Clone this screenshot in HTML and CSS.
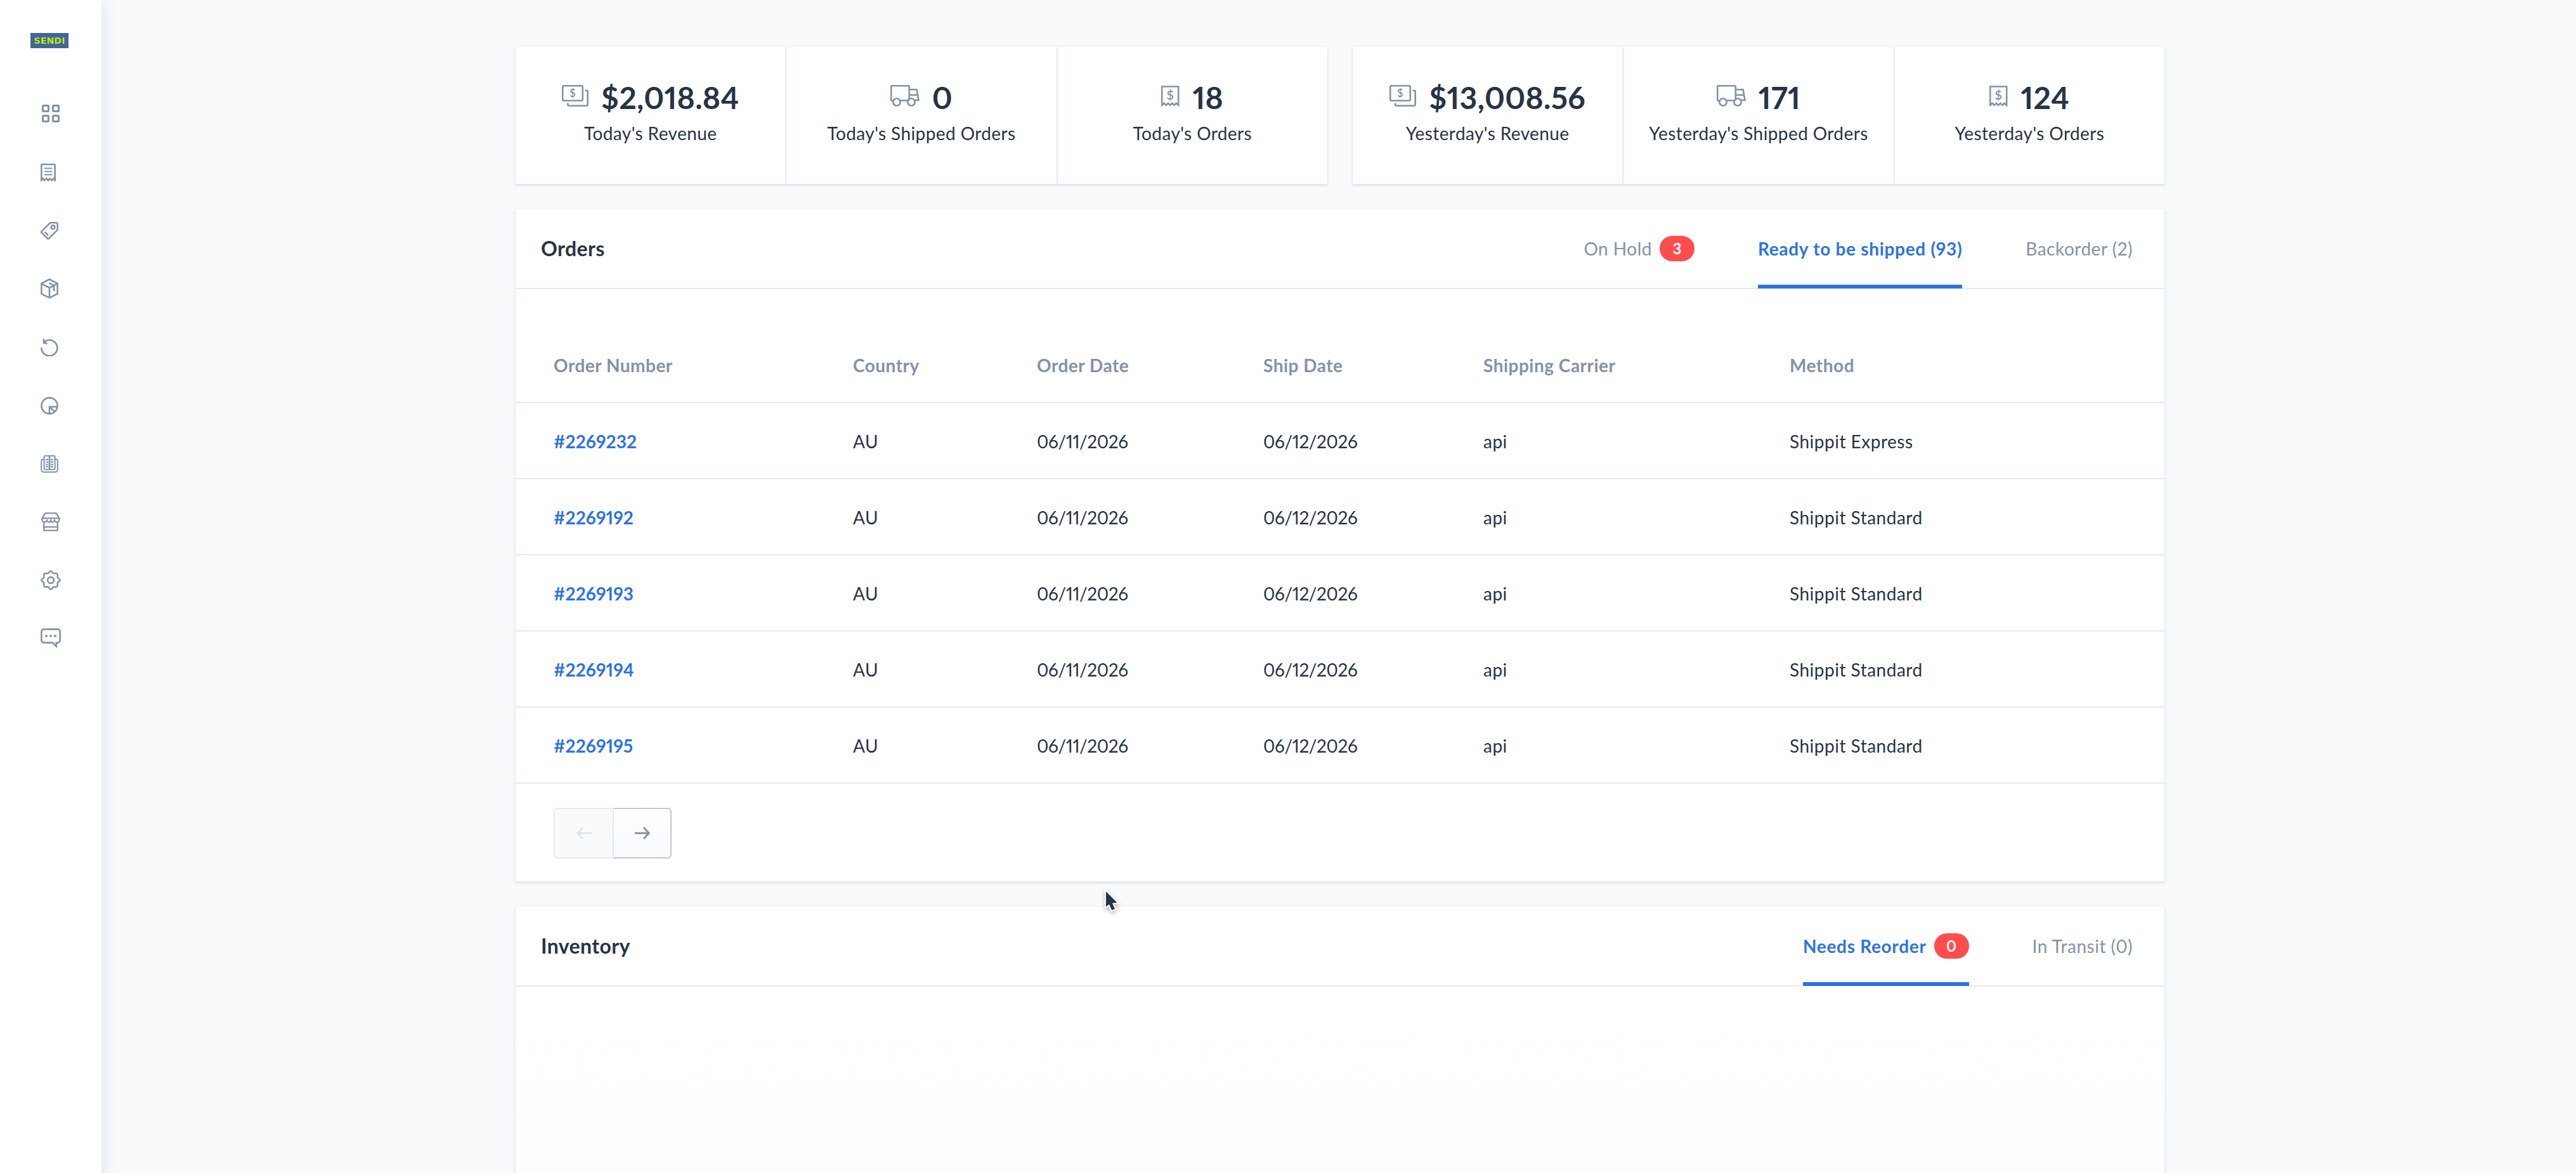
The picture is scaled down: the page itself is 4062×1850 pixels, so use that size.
FILE: index.html
```html
<!DOCTYPE html>
<html lang="en">
<head>
    <meta charset="UTF-8">
    <meta name="viewport" content="width=device-width, initial-scale=1.0">
    <title>Dashboard</title>
    <link rel="stylesheet" href="styles.css">
</head>
<body>

    <aside class="sidebar">
        <div class="logo">SENDI</div>
        <nav class="menu">
            <svg class="icon-dashboard" width="28" height="28" viewBox="0 0 28 28">
                <rect x="1.5" y="1.5" width="9" height="9" rx="1"/>
                <rect x="17.5" y="1.5" width="9" height="9" rx="1"/>
                <rect x="1.5" y="17.5" width="9" height="9" rx="1"/>
                <rect x="17.5" y="17.5" width="9" height="9" rx="1"/>
            </svg>
            <svg class="icon-orders" width="24" height="28" viewBox="0 0 24 28">
                <path d="M1.3 26.5V2.3a1 1 0 0 1 1-1H21.7a1 1 0 0 1 1 1V26.5L20.5 23.5 17.8 26.5 14.8 23.5 12 26.5 9.2 23.5 6.2 26.5 3.5 23.5Z"/>
                <path class="thin" d="M6 7.5H18.5M6 12.5H18.5M6 17.5H18.5"/>
            </svg>
            <svg class="icon-products" width="28" height="28" viewBox="0 0 28 28">
                <path d="M15.2 1.3H24.5a2.2 2.2 0 0 1 2.2 2.2V12.5L13.2 26.2a1.6 1.6 0 0 1-2.3 0L1.7 17.1a1.8 1.8 0 0 1 0-2.5Z"/>
                <circle cx="19.5" cy="8.3" r="2.9"/>
                <path d="M6.6 15.6L12 21.2"/>
            </svg>
            <svg class="icon-inventory" width="28" height="32" viewBox="0 0 28 32">
                <path d="M14 1.5L26.6 8V24.5L14 30.6 1.4 24.5V8ZM1.4 8.4L14 15 26.6 8.4M14 15V30M13.5 7.2L21 11.4V20"/>
            </svg>
            <svg class="icon-returns" width="28" height="28" viewBox="0 0 28 28">
                <path d="M1.4 14.2A12.5 12.5 0 1 0 6.6 4.6M5 0.2V6.8L10.4 7.8M5 6.4L9 3.4"/>
            </svg>
            <svg class="icon-reports" width="28" height="28" viewBox="0 0 28 28">
                <circle cx="14" cy="14" r="12.6"/>
                <path d="M14 26.5V15.5H26.5M14.5 16L22.5 23.5"/>
            </svg>
            <svg class="icon-catalog" width="28" height="28" viewBox="0 0 28 28">
                <path class="thin" d="M5.5 6.2H4A2.8 2.8 0 0 0 1.2 9V22.8A3.8 3.8 0 0 0 5 26.6H23A3.8 3.8 0 0 0 26.8 22.8V9A2.8 2.8 0 0 0 24 6.2H22.5"/>
                <rect class="thin" x="5.6" y="1" width="17" height="21.6" rx="1.5"/>
                <path d="M14 1V22.5"/>
                <path class="thin" d="M8.2 7H12M8.2 10.7H12M8.2 14.4H12M8.2 18.1H12M16 7H20M16 10.7H20M16 14.4H20M16 18.1H20"/>
            </svg>
            <svg class="icon-store" width="30" height="30" viewBox="0 0 30 30">
                <path d="M6.5 1.3H23.5L28.5 9.6A4.6 4.6 0 0 1 24.5 15.6Q22.5 15.6 21 12.8 19.5 15.8 17.8 15.6 16.2 15.6 15 12.8 13.8 15.6 12 15.6 10.5 15.8 9 12.8 7.5 15.6 5.5 15.6A4.6 4.6 0 0 1 1.5 9.6ZM2 9.4H28M4.2 15.6V28.6H25.8V15.6M4.2 23.2H25.8"/>
            </svg>
            <svg class="icon-settings" width="32" height="32" viewBox="0 0 32 32">
                <path d="M13.5 3.7Q16 -0.8 18.5 3.7 20 6 22.5 5.4 27.5 4.5 26.8 9.5 26.3 12 28.5 13.5 32.8 16 28.5 18.5 26.3 20 26.8 22.5 27.5 27.5 22.5 26.6 20 26 18.5 28.3 16 32.8 13.5 28.3 12 26 9.5 26.6 4.5 27.5 5.2 22.5 5.7 20 3.5 18.5 -0.8 16 3.5 13.5 5.7 12 5.2 9.5 4.5 4.5 9.5 5.4 12 6 13.5 3.7Z"/>
                <circle cx="16" cy="16" r="4.9"/>
            </svg>
            <svg class="icon-support" width="32" height="32" viewBox="0 0 32 32">
                <path d="M5 1.4H27A3.6 3.6 0 0 1 30.6 5V19A3.6 3.6 0 0 1 27 22.6H24.8V28.6L18.8 22.6H5A3.6 3.6 0 0 1 1.4 19V5A3.6 3.6 0 0 1 5 1.4Z"/>
                <g class="dots"><circle cx="9" cy="12" r="2.1"/><circle cx="16" cy="12" r="2.1"/><circle cx="23" cy="12" r="2.1"/></g>
            </svg>
        </nav>
    </aside>

    <main class="content">

        <section class="stats">
            <div class="card stat-group">
                <div class="stat">
                    <div class="stat-value">
                        <svg width="42" height="34" viewBox="0 0 42 34">
                            <rect x="1.25" y="1.25" width="31.5" height="23.5" rx="2"/>
                            <path d="M36.5 8.8H39a1.7 1.7 0 0 1 1.7 1.7V30.8a2 2 0 0 1-2 2H11.3a2 2 0 0 1-2-2V28.5"/>
                            <text x="17" y="19" font-size="17" text-anchor="middle">$</text>
                        </svg>
                        $2,018.84
                    </div>
                    <div class="stat-label">Today's Revenue</div>
                </div>
                <div class="stat">
                    <div class="stat-value">
                        <svg width="46" height="34" viewBox="0 0 46 34">
                            <path d="M4.5 25H3a1.8 1.8 0 0 1-1.8-1.8V3A1.8 1.8 0 0 1 3 1.2H28A1.8 1.8 0 0 1 29.8 3V24.5M15.5 24.5H27.5M30 7.2H41.6L44.5 24H39M30 15.8H43"/>
                            <circle cx="10" cy="27" r="5.7"/>
                            <circle cx="33" cy="27" r="5.7"/>
                        </svg>
                        0
                    </div>
                    <div class="stat-label">Today's Shipped Orders</div>
                </div>
                <div class="stat">
                    <div class="stat-value">
                        <svg width="29" height="33" viewBox="0 0 29 33">
                            <path d="M1.2 31V1.5H27.2V31L23.8 27.8 20.6 31 17.4 27.8 14.2 31 11 27.8 7.8 31 4.6 27.8Z"/>
                            <text x="14.2" y="21.5" font-size="20" text-anchor="middle">$</text>
                        </svg>
                        18
                    </div>
                    <div class="stat-label">Today's Orders</div>
                </div>
            </div>
            <div class="card stat-group">
                <div class="stat">
                    <div class="stat-value">
                        <svg width="42" height="34" viewBox="0 0 42 34">
                            <rect x="1.25" y="1.25" width="31.5" height="23.5" rx="2"/>
                            <path d="M36.5 8.8H39a1.7 1.7 0 0 1 1.7 1.7V30.8a2 2 0 0 1-2 2H11.3a2 2 0 0 1-2-2V28.5"/>
                            <text x="17" y="19" font-size="17" text-anchor="middle">$</text>
                        </svg>
                        $13,008.56
                    </div>
                    <div class="stat-label">Yesterday's Revenue</div>
                </div>
                <div class="stat">
                    <div class="stat-value">
                        <svg width="46" height="34" viewBox="0 0 46 34">
                            <path d="M4.5 25H3a1.8 1.8 0 0 1-1.8-1.8V3A1.8 1.8 0 0 1 3 1.2H28A1.8 1.8 0 0 1 29.8 3V24.5M15.5 24.5H27.5M30 7.2H41.6L44.5 24H39M30 15.8H43"/>
                            <circle cx="10" cy="27" r="5.7"/>
                            <circle cx="33" cy="27" r="5.7"/>
                        </svg>
                        171
                    </div>
                    <div class="stat-label">Yesterday's Shipped Orders</div>
                </div>
                <div class="stat">
                    <div class="stat-value">
                        <svg width="29" height="33" viewBox="0 0 29 33">
                            <path d="M1.2 31V1.5H27.2V31L23.8 27.8 20.6 31 17.4 27.8 14.2 31 11 27.8 7.8 31 4.6 27.8Z"/>
                            <text x="14.2" y="21.5" font-size="20" text-anchor="middle">$</text>
                        </svg>
                        124
                    </div>
                    <div class="stat-label">Yesterday's Orders</div>
                </div>
            </div>
        </section>

        <section class="card orders">
            <header class="card-header">
                <h2>Orders</h2>
                <div class="tabs">
                    <a class="tab">On Hold <span class="badge">3</span></a>
                    <a class="tab active">Ready to be shipped (93)</a>
                    <a class="tab">Backorder (2)</a>
                </div>
            </header>
            <table class="orders-table">
                <colgroup>
                    <col class="col-number">
                    <col class="col-country">
                    <col class="col-order-date">
                    <col class="col-ship-date">
                    <col class="col-carrier">
                    <col>
                </colgroup>
                <thead>
                    <tr><th>Order Number</th><th>Country</th><th>Order Date</th><th>Ship Date</th><th>Shipping Carrier</th><th>Method</th></tr>
                </thead>
                <tbody>
                    <tr><td><a>#2269232</a></td><td>AU</td><td class="date">06/11/2026</td><td class="date">06/12/2026</td><td>api</td><td>Shippit Express</td></tr>
                    <tr><td><a>#2269192</a></td><td>AU</td><td class="date">06/11/2026</td><td class="date">06/12/2026</td><td>api</td><td>Shippit Standard</td></tr>
                    <tr><td><a>#2269193</a></td><td>AU</td><td class="date">06/11/2026</td><td class="date">06/12/2026</td><td>api</td><td>Shippit Standard</td></tr>
                    <tr><td><a>#2269194</a></td><td>AU</td><td class="date">06/11/2026</td><td class="date">06/12/2026</td><td>api</td><td>Shippit Standard</td></tr>
                    <tr><td><a>#2269195</a></td><td>AU</td><td class="date">06/11/2026</td><td class="date">06/12/2026</td><td>api</td><td>Shippit Standard</td></tr>
                </tbody>
            </table>
            <div class="pagination">
                <button class="prev" disabled><svg width="24" height="20" viewBox="0 0 24 20"><path d="M24 10H2M10 1L1.8 10 10 19"/></svg></button>
                <button class="next"><svg width="24" height="20" viewBox="0 0 24 20"><path d="M0 10H22M14 1L22.2 10 14 19"/></svg></button>
            </div>
        </section>

        <section class="card inventory">
            <header class="card-header">
                <h2>Inventory</h2>
                <div class="tabs">
                    <a class="tab active">Needs Reorder <span class="badge">0</span></a>
                    <a class="tab">In Transit (0)</a>
                </div>
            </header>
            <div class="inventory-body"></div>
        </section>

    </main>

    <svg class="cursor" width="30" height="42" viewBox="0 0 30 42">
        <path d="M4 4V28L9 24.2 13.2 33.6 18 31.4 14 22.5 21.5 21.5Z"/>
    </svg>

</body>
</html>
```
FILE: styles.css
```css
* {
    box-sizing: border-box;
}
body {
    margin: 0;
    display: flex;
    height: 100vh;
    overflow: hidden;
    background-color: #f9fafc;
    color: #273444;
    font-family: Lato, "Liberation Sans", sans-serif;
    font-size: 28px;
    letter-spacing: 0.4px;
    font-variant-numeric: proportional-nums;
}
svg {
    display: block;
    flex: none;
    fill: none;
    stroke: #8492a6;
    stroke-width: 2.6;
}
svg text {
    fill: #8492a6;
    stroke: none;
    font-weight: 600;
    letter-spacing: 0;
}

/* sidebar */
.sidebar {
    flex: none;
    width: 160px;
    background-color: #fff;
    box-shadow: 0 8px 20px 4px #dfe5ef;
}
.logo {
    width: 60px;
    height: 24px;
    margin: 52px 0 0 48px;
    background-color: #43659a;
    color: #b9e813;
    font: bold 14px/24px "DejaVu Sans", sans-serif;
    letter-spacing: 0.2px;
    text-align: center;
}
.menu {
    padding-left: 64px;
}
.menu .thin {
    stroke-width: 2;
}
.menu .dots {
    fill: #8492a6;
    stroke: none;
}
.icon-dashboard {
    margin: 89px 0 65px 2px;
    stroke-width: 3;
}
.icon-orders {
    margin-bottom: 64px;
}
.icon-products {
    margin-bottom: 61px;
}
.icon-inventory {
    margin-bottom: 63px;
}
.icon-returns {
    margin-bottom: 64px;
}
.icon-reports {
    margin-bottom: 64px;
}
.icon-catalog {
    margin-bottom: 62px;
}
.icon-store {
    margin: 0 0 61px 1px;
    stroke-width: 2.3;
}
.icon-settings {
    margin-bottom: 60px;
}

/* content */
.content {
    display: flex;
    flex-direction: column;
    width: 2600px;
    margin-left: 653px;
    padding-top: 74px;
}
.card {
    background-color: #fff;
    box-shadow: 0 2px 4px 1px #dfe3ec;
}
.stats {
    display: flex;
    gap: 40px;
    margin-bottom: 40px;
}
.stat-group {
    flex: 1;
    display: flex;
    height: 216px;
}
.stat {
    flex: 1 1 0;
    padding-top: 49px;
    text-align: center;
}
.stat + .stat {
    border-left: 2px solid #e5e9f2;
}
.stat-value {
    display: flex;
    justify-content: center;
    align-items: center;
    height: 60px;
    font-size: 48px;
    font-weight: bold;
    letter-spacing: 0.3px;
}
.stat-value svg {
    margin: 0 20px 4px 0;
}
.stat-label {
    margin-top: 7px;
    line-height: 40px;
}

.card-header {
    display: flex;
    justify-content: space-between;
    height: 126px;
    padding: 0 50px 0 40px;
    border-bottom: 2px solid #e5e9f2;
}
.card-header h2 {
    margin: 0;
    font-size: 32px;
    line-height: 123px;
}
.tabs {
    display: flex;
    gap: 100px;
    height: 125px;
}
.tab {
    display: flex;
    align-items: center;
    gap: 12px;
    padding-top: 4px;
    border-bottom: 6px solid transparent;
    color: #8492a6;
    letter-spacing: 0.5px;
}
.tab.active {
    border-color: #2d73e2;
    color: #2d73e2;
    font-weight: bold;
    letter-spacing: 0.7px;
}
.badge {
    width: 55px;
    height: 40px;
    border-radius: 20px;
    background-color: #ff4d4d;
    color: #fff;
    font-size: 24px;
    font-weight: bold;
    line-height: 39px;
    text-align: center;
    letter-spacing: 0;
}

/* orders */
.orders {
    flex: none;
    height: 1060px;
    margin-bottom: 40px;
}
.orders-table {
    width: 100%;
    margin-top: 60px;
    table-layout: fixed;
    border-collapse: separate;
    border-spacing: 0;
}
.orders-table th,
.orders-table td {
    height: 120px;
    padding: 1px 0 0;
    border-bottom: 2px solid #e5e9f2;
    text-align: left;
    letter-spacing: 0.5px;
}
.orders-table th {
    color: #8492a6;
}
.orders-table th:first-child,
.orders-table td:first-child {
    padding-left: 60px;
}
.orders-table a {
    color: #2d73e2;
    font-weight: bold;
    letter-spacing: 0.1px;
}
.orders-table .date {
    letter-spacing: -0.4px;
}
.col-number {
    width: 532px;
}
.col-country {
    width: 290px;
}
.col-order-date {
    width: 357px;
}
.col-ship-date {
    width: 347px;
}
.col-carrier {
    width: 483px;
}
.pagination {
    display: flex;
    padding: 38px 60px;
}
.pagination button {
    display: flex;
    align-items: center;
    justify-content: center;
    width: 93px;
    height: 80px;
    padding: 0;
    border: 2px solid #c0c8d6;
    background: linear-gradient(#fff, #f9fafc);
}
.pagination .prev {
    border-color: #e5e9f2;
    border-right: 0;
    border-radius: 6px 0 0 6px;
    background: #f9fafc;
}
.pagination .prev svg {
    stroke: #e0e4ec;
}
.pagination .next {
    border-left-color: #e5e9f2;
    border-radius: 0 6px 6px 0;
}
.pagination svg {
    stroke-width: 3;
}

/* inventory */
.inventory {
    flex: 1;
    display: flex;
    flex-direction: column;
}
.inventory-body {
    flex: 1;
    background: linear-gradient(#fff 20%, #fdfdfe);
}

.cursor {
    position: absolute;
    left: 1740px;
    top: 1402px;
    fill: #273444;
    stroke: #fff;
    stroke-width: 4;
    paint-order: stroke;
    filter: drop-shadow(0 3px 3px rgba(39, 52, 68, 0.35));
}
```
